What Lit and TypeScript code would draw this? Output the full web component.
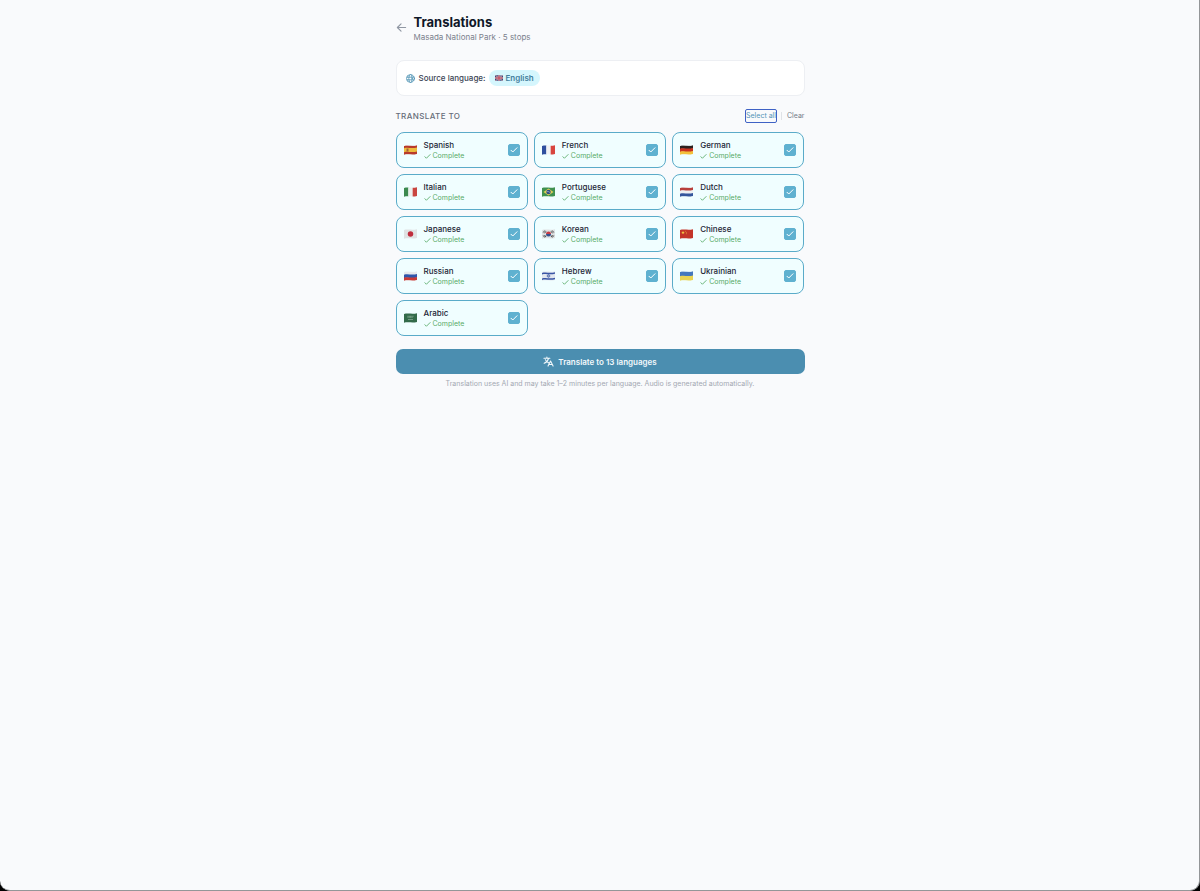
import { LitElement, html, svg, css } from "lit";
import { customElement, property, state } from "lit/decorators.js";

type Language = { name: string; flag: string };

const LANGUAGES: Language[] = [
  { name: "Spanish", flag: "es" },
  { name: "French", flag: "fr" },
  { name: "German", flag: "de" },
  { name: "Italian", flag: "it" },
  { name: "Portuguese", flag: "br" },
  { name: "Dutch", flag: "nl" },
  { name: "Japanese", flag: "jp" },
  { name: "Korean", flag: "kr" },
  { name: "Chinese", flag: "cn" },
  { name: "Russian", flag: "ru" },
  { name: "Hebrew", flag: "il" },
  { name: "Ukrainian", flag: "ua" },
  { name: "Arabic", flag: "sa" },
];

// Flags are drawn on a 26 x 20 canvas and cut to a waving outline.
const bandsAcross = (...colors: string[]) =>
  colors.map((c, i) => svg`<rect x=${(26 / colors.length) * i} y="0" width=${26 / colors.length + 0.2} height="20" fill=${c}/>`);

const wave = (y: number, h: number, color: string) =>
  svg`<path d="M0 ${y + 1.5} C8 ${y - 1} 16 ${y + 3} 26 ${y} V${y + h} C16 ${y + h + 3} 8 ${y + h - 1} 0 ${y + h + 1.5}Z" fill=${color}/>`;

const bandsDown = (...colors: string[]) => {
  const h = 18 / colors.length;
  return colors.map((c, i) => wave(i * h, h + 1, c));
};

const ART: Record<string, unknown> = {
  es: svg`${wave(0, 19, "#b83a2b")}${wave(5, 8, "#ecbc3c")}<rect x="5" y="7" width="4" height="6" fill="#a5603a"/>`,
  fr: bandsAcross("#2f4f9e", "#f1f2f4", "#d8453e"),
  de: bandsDown("#2a2220", "#c8321f", "#f3c13a"),
  it: bandsAcross("#3c8a50", "#ecefed", "#c9453f"),
  br: svg`<rect width="26" height="20" fill="#3f9150"/><path d="M13 3 23 10 13 17 3 10Z" fill="#e0cf55"/><circle cx="13" cy="10" r="4.500" fill="#2d4c83"/><path d="M9.400 9.200q4-.8 7 2" stroke="#dfe8ee" fill="none"/>`,
  nl: bandsDown("#b8403c", "#eef0f2", "#34569c"),
  jp: svg`<rect width="26" height="20" fill="#dfe2e3"/><circle cx="13" cy="10" r="5.500" fill="#bf2c3c"/>`,
  kr: svg`<rect width="26" height="20" fill="#dfe2e3"/><path d="M8 10a5 5 0 0 1 10 0Z" fill="#c73a44"/><path d="M8 10a5 5 0 0 0 10 0Z" fill="#34518f"/><path d="m2.500 7 3-4M5 8.500l3-4M18 4.500l3 4M20.500 3l3 4M2.500 13l3 4M5 12l3 4M18 16l3-4M20.500 17l3-4" stroke="#333" stroke-width="1.800"/>`,
  cn: svg`<rect width="26" height="20" fill="#c33429"/><path d="m6 3.500 1 2.400h2.600l-2 1.700.7 2.500L6 8.600l-2.300 1.500.7-2.500-2-1.700H5Z" fill="#f2cb45"/><g fill="#f2cb45"><circle cx="11.500" cy="4.500" r=".8"/><circle cx="13" cy="6.800" r=".8"/><circle cx="12.500" cy="9.500" r=".8"/></g>`,
  ru: bandsDown("#e6e9ec", "#2f56ab", "#c93a36"),
  il: svg`<rect width="26" height="20" fill="#e1e6ee"/>${wave(2.5, 3, "#3956a5")}${wave(13.5, 3, "#3956a5")}<path d="m13 6.500 3 5h-6ZM13 13.300l3-5h-6Z" fill="none" stroke="#3956a5"/>`,
  ua: bandsDown("#4478bd", "#ead452"),
  sa: svg`<rect width="26" height="20" fill="#326b4a"/><path d="M7 6.500h12M7 8.500h11" stroke="#b5cdbe" stroke-width="1.200" stroke-dasharray="2 .6"/><path d="M8 13h10" stroke="#b5cdbe"/>`,
  gb: svg`<rect width="26" height="20" fill="#33497f"/><path d="m0 0 26 20M26 0 0 20" stroke="#d8dae3" stroke-width="3"/><path d="m0 0 26 20M26 0 0 20" stroke="#c5394a" stroke-width="1.500"/><path d="M13 0v20M0 10h26" stroke="#d8dae3" stroke-width="5"/><path d="M13 0v20M0 10h26" stroke="#c5394a" stroke-width="3.500"/>`,
};

@customElement("flag-icon")
export class FlagIcon extends LitElement {
  @property() code = "";

  static styles = css`
    :host { display: block; }
    .flag { display: block; width: 100%; height: auto; }
  `;

  render() {
    return html`<svg class="flag" viewBox="0 0 26 20" aria-hidden="true">
      <defs><clipPath id="cloth"><path d="M0 2C8 -.5 16 3 26 .5V18C16 20.500 8 17 0 19.500Z"/></clipPath></defs>
      <g clip-path="url(#cloth)">${ART[this.code]}</g>
    </svg>`;
  }
}

@customElement("app-root")
export class AppRoot extends LitElement {
  @state() private selected = new Set(LANGUAGES.map((l) => l.name));

  static styles = css`
    :host {
      display: block;
      background: #000;
      font-family: Inter, "Liberation Sans", sans-serif;
      color: #1c2536;
    }
    *, *::before, *::after { box-sizing: border-box; }
    svg { display: block; fill: none; stroke: currentColor; stroke-linecap: round; stroke-linejoin: round; }
    button { font: inherit; border: 0; padding: 0; background: none; cursor: pointer; color: inherit; }
    .screen {
      min-height: 100vh;
      padding-left: 1px;
      background: #f9fafc;
      border: solid #949698;
      border-width: 0 1px 1px 0;
      border-radius: 0 0 10px 10px;
    }
    .content { max-width: 409px; margin: 0 auto; padding: 13px 0; }
    .header { display: flex; align-items: center; gap: 7px; margin-bottom: 18px; }
    .back { color: #9097a3; }
    .back svg { width: 11px; height: 11px; }
    h1 { margin: 0; font-size: 13px; line-height: 18px; font-weight: 700; color: #0f1728; }
    .sub { margin: 1px 0 0; font-size: 8px; line-height: 10px; color: #7b818d; }
    .source {
      display: flex; align-items: center; gap: 4px;
      padding: 9px; min-height: 36px;
      background: #fff; border: 1px solid #edeff3; border-radius: 8px;
      font-size: 8px; line-height: 12px; font-weight: 500; color: #3b4454;
    }
    .globe { width: 9px; height: 9px; color: #4f93b4; }
    .pill {
      display: flex; align-items: center; gap: 2px;
      padding: 2px 6px; border-radius: 8px;
      background: #d5f6fd; color: #437f9e; font-weight: 600;
    }
    .pill flag-icon { width: 8px; }
    .bar { display: flex; justify-content: space-between; align-items: center; margin: 12px 0 8px; min-height: 16px; }
    h2 { margin: 0; font-size: 8px; line-height: 12px; font-weight: 500; letter-spacing: 0.05em; text-transform: uppercase; color: #666c79; }
    .actions { display: flex; align-items: center; gap: 5px; font-size: 7px; line-height: 12px; color: #737a87; }
    .all { color: #5595b8; outline: 1px solid #3f62c5; border-radius: 1px; }
    .divider { width: 1px; height: 8px; background: #dfe2e7; }
    .grid { display: grid; grid-template-columns: repeat(3, 1fr); gap: 6px; }
    .card {
      display: flex; align-items: center; gap: 7px;
      padding: 6px 7px; min-height: 36px;
      background: #f8fafc; border: 1px solid #dfe5ea; border-radius: 8px;
      cursor: pointer;
    }
    .card.on { background: #f0feff; border-color: #5aabc9; }
    .card flag-icon { width: 13px; }
    .text { flex: 1; display: flex; flex-direction: column; }
    .name { font-size: 8px; line-height: 12px; font-weight: 500; }
    .status { display: flex; align-items: center; gap: 2px; font-size: 7px; line-height: 10px; color: #58ab68; }
    .status svg { width: 7px; height: 7px; }
    .tick { display: grid; place-items: center; color: #fff; }
    .tick > * { grid-area: 1 / 1; }
    .tick input { appearance: none; margin: 0; width: 12px; height: 12px; border: 1px solid #c6ccd4; border-radius: 2px; }
    .tick input:checked { background: #5fb1d0; border-color: #5fb1d0; }
    .tick svg { width: 8px; height: 8px; pointer-events: none; }
    .go {
      display: flex; align-items: center; justify-content: center; gap: 4px;
      width: 100%; height: 25px; margin-top: 13px; border-radius: 7px;
      background: #4b8eb0; color: #f3f9fc; font-size: 8px; font-weight: 600;
    }
    .go svg { width: 11px; height: 11px; }
    .note { margin: 5px 0 0; text-align: center; font-size: 7px; line-height: 10px; color: #a3a8b2; }
  `;

  private toggle(name: string) {
    const next = new Set(this.selected);
    if (!next.delete(name)) next.add(name);
    this.selected = next;
  }

  private check(width: number) {
    return html`<svg viewBox="0 0 16 16" stroke-width=${width} aria-hidden="true"><path d="m2 8.500 3.500 3.500L14 3.500"/></svg>`;
  }

  private card(lang: Language) {
    const on = this.selected.has(lang.name);
    return html`<label class="card ${on ? "on" : ""}">
      <flag-icon code=${lang.flag}></flag-icon>
      <span class="text">
        <span class="name">${lang.name}</span>
        <span class="status">${this.check(2)}Complete</span>
      </span>
      <span class="tick">
        <input type="checkbox" .checked=${on} @change=${() => this.toggle(lang.name)} />
        ${on ? this.check(2) : null}
      </span>
    </label>`;
  }

  render() {
    return html`<div class="screen"><main class="content">
      <header class="header">
        <button class="back" aria-label="Back">
          <svg viewBox="0 0 24 24" stroke-width="2.500"><path d="M21 12H3M11 4l-8 8 8 8"/></svg>
        </button>
        <div>
          <h1>Translations</h1>
          <p class="sub">Masada National Park · 5 stops</p>
        </div>
      </header>
      <section class="source">
        <svg class="globe" viewBox="0 0 24 24" stroke-width="2.200" aria-hidden="true">
          <circle cx="12" cy="12" r="10.500"/><ellipse cx="12" cy="12" rx="4.500" ry="10.500"/><path d="M2.500 8.500h19M2.500 15.500h19"/>
        </svg>
        <span>Source language:</span>
        <span class="pill"><flag-icon code="gb"></flag-icon>English</span>
      </section>
      <div class="bar">
        <h2>Translate to</h2>
        <div class="actions">
          <button class="all" @click=${() => (this.selected = new Set(LANGUAGES.map((l) => l.name)))}>Select all</button>
          <span class="divider"></span>
          <button @click=${() => (this.selected = new Set())}>Clear</button>
        </div>
      </div>
      <div class="grid">${LANGUAGES.map((l) => this.card(l))}</div>
      <button class="go">
        <svg viewBox="0 0 24 24" stroke-width="2.300" aria-hidden="true">
          <path d="M2 5h13M8.500 2v3M12 5c-1 5-4.500 9-9.500 11M5 8c1.500 3.500 4.500 6 8 7.500M11 22l5.500-11L22 22M13 18.500h7"/>
        </svg>
        Translate to ${this.selected.size} languages
      </button>
      <p class="note">Translation uses AI and may take 1–2 minutes per language. Audio is generated automatically.</p>
    </main></div>`;
  }
}
